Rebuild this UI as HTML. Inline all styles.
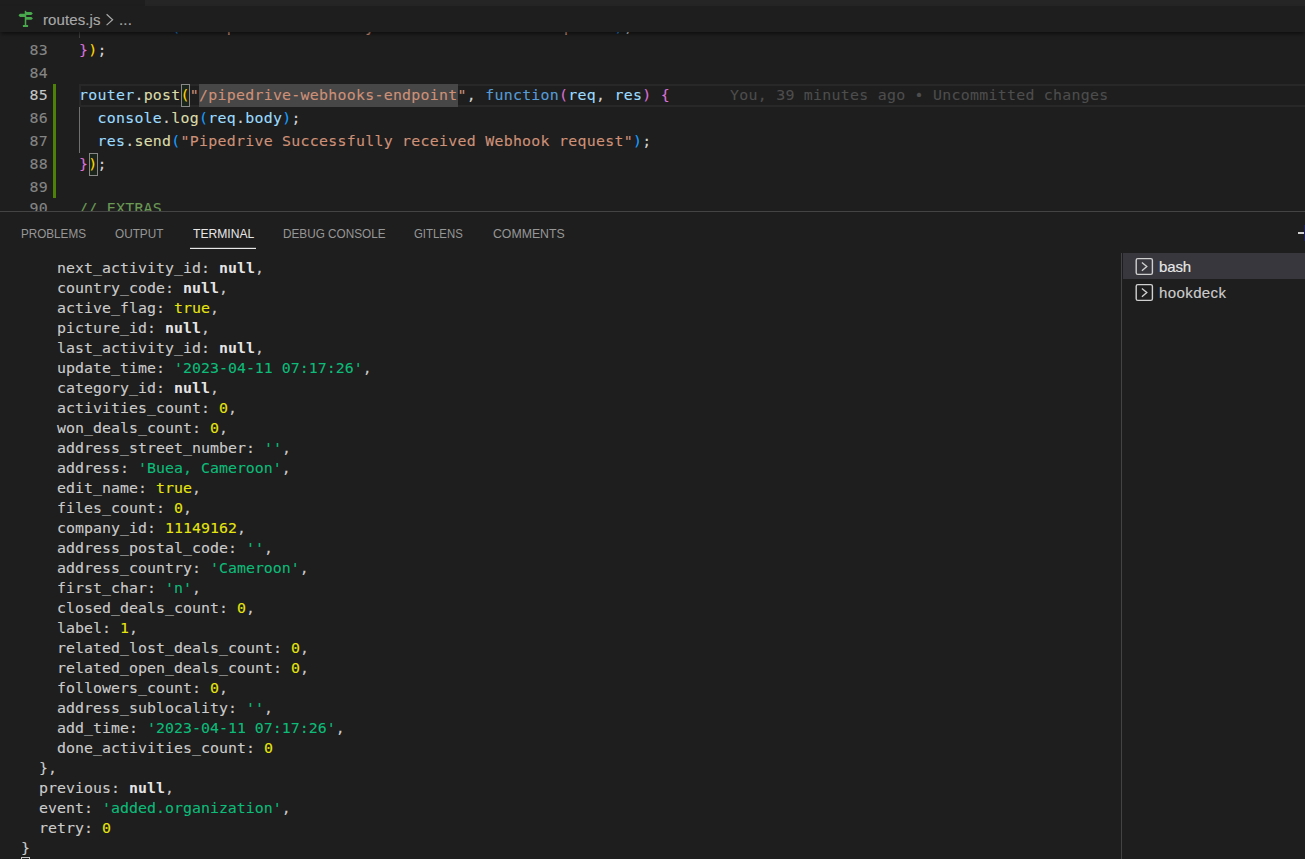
<!DOCTYPE html>
<html lang="en">
<head>
<meta charset="utf-8">
<title>routes.js</title>
<style>
*{box-sizing:border-box;margin:0;padding:0}
html,body{width:1305px;height:859px;overflow:hidden;background:#1e1e1e}
body{position:relative;font-family:"Liberation Sans",sans-serif;color:#cccccc}
.abs{position:absolute}
#tabstrip{left:145px;top:0;width:1160px;height:6px;background:#252526}
#crumb{left:0;top:6px;width:1305px;height:26px;background:#1e1e1e;z-index:5;box-shadow:0 3px 4px -1px rgba(0,0,0,.55)}
#crumb .t{position:absolute;top:4px;font-size:15px;line-height:20px;color:#a9a9a9;white-space:pre;-webkit-text-stroke:0.15px}
#editor{left:0;top:32px;width:1305px;height:179px;overflow:hidden;background:#1e1e1e}
.ln{position:absolute;left:0;width:1305px;height:23px;font-family:"DejaVu Sans Mono","Liberation Mono",monospace;font-size:14.9px;letter-spacing:0.266px;line-height:23px;white-space:pre;color:#d4d4d4;-webkit-text-stroke:0.1px}
.ln .n{position:absolute;left:0;width:48px;text-align:right;color:#858585}
.ln .c{position:absolute;left:79px}
.v{color:#9cdcfe}.f{color:#dcdcaa}.s{color:#ce9178}.k{color:#569cd6}.b1{color:#ffd700}.b2{color:#da70d6}.b3{color:#179fff}.cm{color:#6a9955}
.curline{position:absolute;left:79px;top:52px;width:1240px;height:23px;border:2px solid #282828}
.sel{position:absolute;left:199px;top:52px;width:259px;height:23px;background:#474747}
.bm{position:absolute;width:8.5px;height:23px;border:1px solid #888888;background:#1b251b}
.gut{position:absolute;left:53px;top:52px;width:3px;height:114px;background:#4d8206}
.ig{position:absolute;left:79px;width:1px}
.bl{position:absolute;left:730px;color:#4d4d4d}
#panel{left:0;top:211px;width:1305px;height:648px;background:#1e1e1e;border-top:1px solid #444444}
.tab{position:absolute;top:14px;font-size:13px;line-height:16px;color:#969696;white-space:pre;transform-origin:0 50%}
.ul{position:absolute;left:190px;top:36px;width:66px;height:1px;background:#e7e7e7;box-shadow:0 -1px 0 rgba(231,231,231,.18)}
.plush{position:absolute;left:1298px;top:20px;width:7px;height:2px;background:#d0d0d0}
.plusv{position:absolute;left:1304px;top:13px;width:1px;height:16px;background:#1e1e5c}
.tab.on{color:#e7e7e7}
#term{left:21px;top:258px;font-family:"DejaVu Sans Mono","Liberation Mono",monospace;font-size:14.9px;letter-spacing:0.0295px;line-height:20px;white-space:pre;color:#cccccc;-webkit-text-stroke:0.1px}
#term b{color:#e5e5e5;font-weight:bold;-webkit-text-stroke:0}
#term u{text-decoration:none;position:relative;top:-1px}
.y{color:#e5e510}.g{color:#0dbc79}
#tlist{left:1121px;top:253px;width:184px;height:606px;border-left:1px solid #434343}
.ti{position:absolute;width:182px;height:26px;font-size:15px;line-height:26px;color:#cccccc;-webkit-text-stroke:0.15px}
.ti.sel{background:#37373d;color:#e7e7e7}
.ti span{position:absolute;left:36px;top:1px}
</style>
</head>
<body>
<div id="tabstrip" class="abs"></div>

<div id="editor" class="abs">
  <div class="curline"></div>
  <div class="sel"></div>
  <div class="bm" style="left:181px;top:52px"></div>
  <div class="bm" style="left:89px;top:121px"></div>
  <div class="gut"></div>
  <div class="ig" style="top:0;height:6px;background:#404040"></div>
  <div class="ig" style="top:75px;height:46px;background:#707070"></div>
  <div class="ln" style="top:-16px"><span class="n">82</span><span class="c">  <span class="v">res</span>.<span class="f">send</span><span class="b3">(</span><span class="s">"Hubspot Successfully received Webhook request"</span><span class="b3">)</span>;</span></div>
  <div class="ln" style="top:7px"><span class="n">83</span><span class="c"><span class="b2">}</span><span class="b1">)</span>;</span></div>
  <div class="ln" style="top:30px"><span class="n">84</span><span class="c"></span></div>
  <div class="ln" style="top:52px"><span class="n" style="color:#c6c6c6">85</span><span class="c"><span class="v">router</span>.<span class="f">post</span><span class="b1">(</span><span class="s">"/pipedrive-webhooks-endpoint"</span>, <span class="k">function</span><span class="b2">(</span><span class="v">req</span>, <span class="v">res</span><span class="b2">)</span> <span class="b2">{</span></span><span class="bl">You, 39 minutes ago • Uncommitted changes</span></div>
  <div class="ln" style="top:75px"><span class="n">86</span><span class="c">  <span class="v">console</span>.<span class="f">log</span><span class="b3">(</span><span class="v">req</span>.<span class="v">body</span><span class="b3">)</span>;</span></div>
  <div class="ln" style="top:98px"><span class="n">87</span><span class="c">  <span class="v">res</span>.<span class="f">send</span><span class="b3">(</span><span class="s">"Pipedrive Successfully received Webhook request"</span><span class="b3">)</span>;</span></div>
  <div class="ln" style="top:121px"><span class="n">88</span><span class="c"><span class="b2">}</span><span class="b1">)</span>;</span></div>
  <div class="ln" style="top:144px"><span class="n">89</span><span class="c"></span></div>
  <div class="ln" style="top:165px"><span class="n">90</span><span class="c"><span class="cm">// EXTRAS</span></span></div>
</div>

<div id="crumb" class="abs">
  <span class="t" style="left:43px;letter-spacing:0.1px">routes.js</span>
  <span class="t" style="left:119px;letter-spacing:0.2px">...</span>
</div>
<svg class="abs" style="left:14px;top:6px;z-index:6" width="26" height="26" viewBox="14 6 26 26">
  <g fill="#49aa4d">
    <rect x="24.75" y="10.8" width="1.5" height="14.8"/>
    <rect x="22.9" y="25" width="5.2" height="2" rx="0.6"/>
    <polygon points="25.5,12 31.3,12 32.8,13.55 31.3,15.1 25.5,15.1"/>
    <polygon points="25.5,13.7 20,13.7 18.5,15.3 20,16.9 25.5,16.9"/>
    <polygon points="25.5,17 31.4,17 32.9,18.4 31.4,19.8 25.5,19.8"/>
  </g>
</svg>
<svg class="abs" style="left:100px;top:6px;z-index:6" width="20" height="26" viewBox="100 6 20 26">
  <path d="M106.6 14.3 L112.6 19.7 L106.6 25.1" fill="none" stroke="#a9a9a9" stroke-width="1.2"/>
</svg>

<div id="panel" class="abs">
  <span class="tab" style="left:21px;transform:scaleX(.899)">PROBLEMS</span>
  <span class="tab" style="left:114.5px;transform:scaleX(.904)">OUTPUT</span>
  <span class="tab on" style="left:192.6px;transform:scaleX(.932)">TERMINAL</span>
  <span class="tab" style="left:282.8px;transform:scaleX(.904)">DEBUG CONSOLE</span>
  <span class="tab" style="left:414.2px;transform:scaleX(.876)">GITLENS</span>
  <span class="tab" style="left:492.5px;transform:scaleX(.945)">COMMENTS</span>
  <div class="ul"></div>
  <div class="plush"></div>
  <div class="plusv"></div>
</div>

<pre id="term" class="abs">    next<u>_</u>activity<u>_</u>id: <b>null</b>,
    country<u>_</u>code: <b>null</b>,
    active<u>_</u>flag: <span class="y">true</span>,
    picture<u>_</u>id: <b>null</b>,
    last<u>_</u>activity<u>_</u>id: <b>null</b>,
    update<u>_</u>time: <span class="g">'2023-04-11 07:17:26'</span>,
    category<u>_</u>id: <b>null</b>,
    activities<u>_</u>count: <span class="y">0</span>,
    won<u>_</u>deals<u>_</u>count: <span class="y">0</span>,
    address<u>_</u>street<u>_</u>number: <span class="g">''</span>,
    address: <span class="g">'Buea, Cameroon'</span>,
    edit<u>_</u>name: <span class="y">true</span>,
    files<u>_</u>count: <span class="y">0</span>,
    company<u>_</u>id: <span class="y">11149162</span>,
    address<u>_</u>postal<u>_</u>code: <span class="g">''</span>,
    address<u>_</u>country: <span class="g">'Cameroon'</span>,
    first<u>_</u>char: <span class="g">'n'</span>,
    closed<u>_</u>deals<u>_</u>count: <span class="y">0</span>,
    label: <span class="y">1</span>,
    related<u>_</u>lost<u>_</u>deals<u>_</u>count: <span class="y">0</span>,
    related<u>_</u>open<u>_</u>deals<u>_</u>count: <span class="y">0</span>,
    followers<u>_</u>count: <span class="y">0</span>,
    address<u>_</u>sublocality: <span class="g">''</span>,
    add<u>_</u>time: <span class="g">'2023-04-11 07:17:26'</span>,
    done<u>_</u>activities<u>_</u>count: <span class="y">0</span>
  },
  previous: <b>null</b>,
  event: <span class="g">'added.organization'</span>,
  retry: <span class="y">0</span>
}</pre>

<div id="tlist" class="abs"></div>
<div class="ti sel abs" style="top:253px;left:1123px"><span style="letter-spacing:-0.14px">bash</span></div>
<div class="ti abs" style="top:279px;left:1123px"><span style="letter-spacing:0.4px">hookdeck</span></div>
<svg class="abs" style="left:1130px;top:253px" width="30" height="52" viewBox="1130 253 30 52">
  <g fill="none" stroke="#d0d0d0">
    <rect x="1136.2" y="258.6" width="16.2" height="15.8" rx="1.6" stroke-width="1.4"/>
    <path d="M1141.9 262.4 L1146.8 266.6 L1141.9 270.8" stroke-width="1.35"/>
    <rect x="1136.2" y="284.6" width="16.2" height="15.8" rx="1.6" stroke-width="1.4"/>
    <path d="M1141.9 288.4 L1146.8 292.6 L1141.9 296.8" stroke-width="1.35"/>
  </g>
</svg>
<div class="abs" style="left:21px;top:857px;width:9px;height:4px;border:1px solid #c0c0c0"></div>

</body>
</html>
